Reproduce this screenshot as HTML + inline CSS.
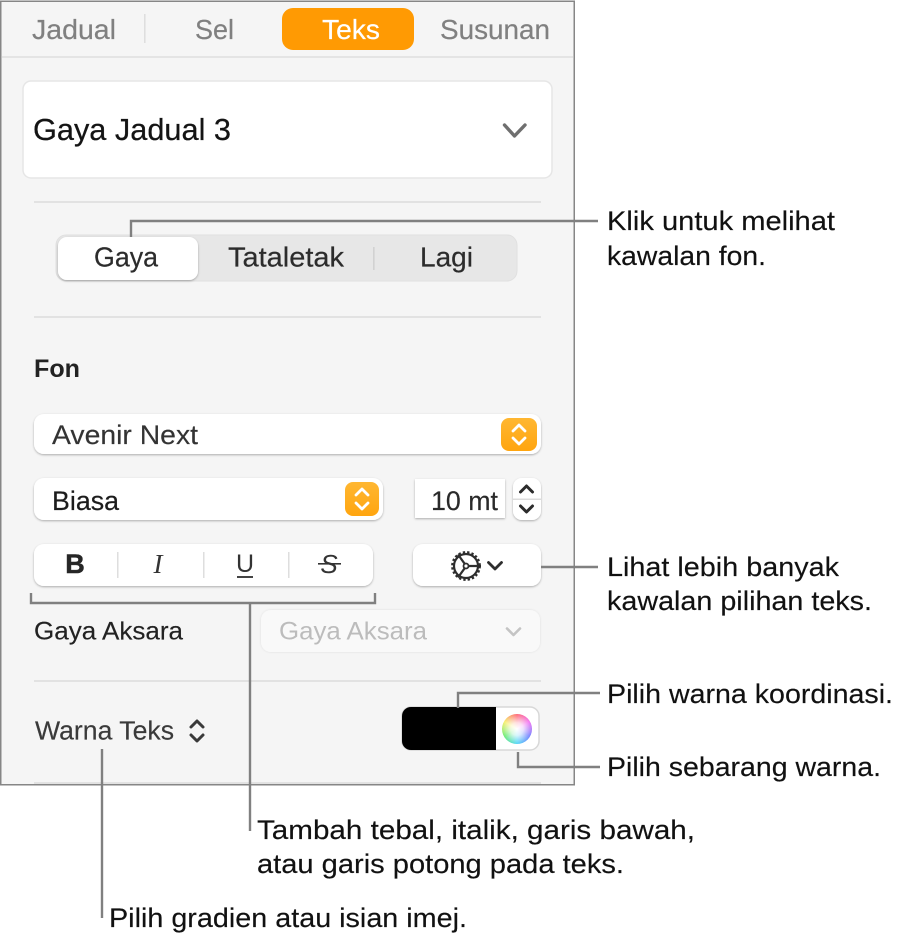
<!DOCTYPE html>
<html><head><meta charset="utf-8">
<style>
html,body{margin:0;padding:0;background:#fff;width:910px;height:944px;overflow:hidden}
svg{display:block}
text{font-family:"Liberation Sans",sans-serif}
.wheel{width:30px;height:30px;border-radius:50%;background:radial-gradient(circle,#fff 0%,rgba(255,255,255,.8) 30%,rgba(255,255,255,0) 80%),conic-gradient(#ff4d5e,#f05af0 60deg,#5a6cff 120deg,#35d0f5 180deg,#50e85a 240deg,#f5ec50 300deg,#ff4d5e)}
</style></head>
<body>
<svg width="910" height="944" viewBox="0 0 910 944" xmlns="http://www.w3.org/2000/svg">
<defs>
<filter id="s" x="-5%" y="-10%" width="110%" height="130%"><feDropShadow dx="0" dy="1" stdDeviation="1.100" flood-color="#000" flood-opacity=".3"/></filter>
<filter id="l" x="-5%" y="-10%" width="110%" height="130%"><feDropShadow dx="0" dy="0" stdDeviation="1" flood-color="#000" flood-opacity=".1"/></filter>
<linearGradient id="o" x1="0" y1="0" x2="0" y2="1"><stop offset="0" stop-color="#ffb732"/><stop offset="1" stop-color="#ffa50f"/></linearGradient>
</defs>

<!-- panel -->
<rect x=".75" y="1.25" width="573.5" height="783.5" fill="#f5f5f5" stroke="#868686" stroke-width="1.5"/>
<rect x="2" y="56" width="571" height="2" fill="#e4e4e4"/>

<!-- tabs -->
<rect x="282" y="8" width="132" height="42" rx="11" fill="#ff9a03"/>
<rect x="144" y="14" width="1.6" height="29" fill="#dedede"/>
<text x="32" y="39" font-size="28" stroke="#808080" stroke-width=".2" fill="#808080" textLength="84" lengthAdjust="spacingAndGlyphs">Jadual</text>
<text x="195" y="39" font-size="28" stroke="#808080" stroke-width=".2" fill="#808080" textLength="39" lengthAdjust="spacingAndGlyphs">Sel</text>
<text x="322" y="39" font-size="28" stroke="#fff" stroke-width=".2" fill="#fff" textLength="58" lengthAdjust="spacingAndGlyphs">Teks</text>
<text x="440" y="39" font-size="28" stroke="#808080" stroke-width=".2" fill="#808080" textLength="110" lengthAdjust="spacingAndGlyphs">Susunan</text>

<!-- style card -->
<rect x="23" y="81" width="529" height="97" rx="8" fill="#fff" stroke="#e6e6e6" stroke-width="1.5"/>
<text x="33" y="140" font-size="31" stroke="#141414" stroke-width=".25" fill="#141414" textLength="198" lengthAdjust="spacingAndGlyphs">Gaya Jadual 3</text>
<path d="M504.500 125L514.500 136L525 125" fill="none" stroke="#6f6f6f" stroke-width="3.400" stroke-linecap="round" stroke-linejoin="round"/>
<rect x="34" y="201" width="507" height="2" fill="#e2e2e2"/>

<!-- segmented -->
<rect x="56" y="235" width="461" height="46" rx="10" fill="#e7e7e7" stroke="#e0e0e0"/>
<rect x="58" y="237" width="140" height="43" rx="9" fill="#fff" filter="url(#s)"/>
<rect x="373" y="247" width="1.600" height="23" fill="#d2d2d2"/>
<text x="94" y="266.500" font-size="27.500" stroke="#2c2c2c" stroke-width=".2" fill="#2c2c2c" textLength="64" lengthAdjust="spacingAndGlyphs">Gaya</text>
<text x="228" y="266.500" font-size="27.500" stroke="#2c2c2c" stroke-width=".2" fill="#2c2c2c" textLength="116" lengthAdjust="spacingAndGlyphs">Tataletak</text>
<text x="420" y="266.500" font-size="27.500" stroke="#2c2c2c" stroke-width=".2" fill="#2c2c2c" textLength="53" lengthAdjust="spacingAndGlyphs">Lagi</text>
<rect x="34" y="316" width="507" height="2" fill="#e2e2e2"/>

<text x="34" y="377" font-size="25" font-weight="700" fill="#222" textLength="46" lengthAdjust="spacingAndGlyphs">Fon</text>

<!-- font popup -->
<rect x="34" y="414" width="507" height="40" rx="10" fill="#fff" filter="url(#s)"/>
<text x="52" y="444" font-size="27" stroke="#333" stroke-width=".15" fill="#333" textLength="146" lengthAdjust="spacingAndGlyphs">Avenir Next</text>
<rect x="501" y="418" width="36" height="33" rx="8" fill="url(#o)"/>
<path d="M513 431l6-6 6 6M513 438l6 6 6-6" fill="none" stroke="#fff" stroke-width="2.800" stroke-linecap="round" stroke-linejoin="round"/>

<!-- biasa popup -->
<rect x="34" y="478" width="349" height="42" rx="10" fill="#fff" filter="url(#s)"/>
<text x="52" y="510" font-size="27" stroke="#1c1c1c" stroke-width=".2" fill="#1c1c1c" textLength="67" lengthAdjust="spacingAndGlyphs">Biasa</text>
<rect x="345" y="482" width="34" height="34" rx="8" fill="url(#o)"/>
<path d="M356 495l6-6 6 6M356 503l6 6 6-6" fill="none" stroke="#fff" stroke-width="2.800" stroke-linecap="round" stroke-linejoin="round"/>

<!-- size field -->
<rect x="415" y="479" width="90" height="39" fill="#fff" filter="url(#s)"/>
<text x="431" y="510" font-size="27" stroke="#2a2a2a" stroke-width=".15" fill="#2a2a2a" textLength="67" lengthAdjust="spacingAndGlyphs">10 mt</text>
<rect x="513" y="478" width="28" height="42" rx="9" fill="#fff" filter="url(#s)"/>
<rect x="513" y="498.500" width="28" height="1.500" fill="#dcdcdc"/>
<path d="M520.500 492l6-6 6 6M520.500 506l6 6 6-6" fill="none" stroke="#2c2c2c" stroke-width="3" stroke-linecap="round" stroke-linejoin="round"/>

<!-- BIUS -->
<rect x="34" y="544" width="339" height="42" rx="10" fill="#fff" filter="url(#s)"/>
<rect x="117" y="552" width="1.500" height="26" fill="#dedede"/>
<rect x="203" y="552" width="1.500" height="26" fill="#dedede"/>
<rect x="288" y="552" width="1.500" height="26" fill="#dedede"/>
<text x="75" y="573" font-size="27" font-weight="700" stroke="#262626" stroke-width=".5" fill="#262626" text-anchor="middle">B</text>
<text x="158" y="573" font-size="27" font-style="italic" fill="#333" text-anchor="middle" style="font-family:'Liberation Serif',serif">I</text>
<text x="245" y="572" font-size="25" fill="#333" text-anchor="middle">U</text>
<rect x="237" y="576" width="16" height="2" fill="#444"/>
<text x="329" y="573" font-size="26" fill="#333" text-anchor="middle" font-style="italic">S</text>
<rect x="318" y="563" width="23" height="1.600" fill="#333"/>

<!-- gear button -->
<rect x="413" y="544" width="128" height="42" rx="10" fill="#fff" filter="url(#s)"/>
<circle cx="466" cy="566" r="12" fill="none" stroke="#2e2e2e" stroke-width="2.200"/>
<circle cx="466" cy="566" r="13.500" fill="none" stroke="#2e2e2e" stroke-width="2.800" stroke-dasharray="2.300 2"/>
<circle cx="466" cy="566" r="2.500" fill="none" stroke="#2e2e2e" stroke-width="1.800"/>
<path d="M468.500 566H481M464.700 563.800L458 554.500M464.700 568.200L458 577.500" fill="none" stroke="#2e2e2e" stroke-width="2.200"/>
<path d="M488.500 562.500l6.500 6.500 6.500-6.500" fill="none" stroke="#2e2e2e" stroke-width="2.800" stroke-linecap="round" stroke-linejoin="round"/>

<!-- gaya aksara -->
<text x="34" y="639.500" font-size="25" stroke="#222" stroke-width=".15" fill="#222" textLength="149" lengthAdjust="spacingAndGlyphs">Gaya Aksara</text>
<rect x="261" y="610" width="279" height="42" rx="10" fill="#f9f9f9" filter="url(#l)"/>
<text x="279" y="639.500" font-size="25" fill="#bcbcbc" textLength="148" lengthAdjust="spacingAndGlyphs">Gaya Aksara</text>
<path d="M507 628.500l6.500 6.500 6.500-6.500" fill="none" stroke="#c4c4c4" stroke-width="2.600" stroke-linecap="round" stroke-linejoin="round"/>
<rect x="34" y="680" width="507" height="2" fill="#e2e2e2"/>

<!-- warna teks -->
<text x="35" y="739.500" font-size="25.500" stroke="#3a3a3a" stroke-width=".15" fill="#3a3a3a" textLength="139" lengthAdjust="spacingAndGlyphs">Warna Teks</text>
<path d="M191 727l6-6 6 6M191 735l6 6 6-6" fill="none" stroke="#3a3a3a" stroke-width="3" stroke-linecap="round" stroke-linejoin="round"/>
<rect x="402" y="707" width="137" height="43" rx="9" fill="#fff" stroke="#d8d8d8" stroke-width="1.500"/>
<path d="M411 707H496V750H411a9 9 0 0 1-9-9V716a9 9 0 0 1 9-9Z" fill="#000"/>
<foreignObject x="502" y="714" width="30" height="30"><div xmlns="http://www.w3.org/1999/xhtml" class="wheel"></div></foreignObject>
<rect x="34" y="782" width="507" height="2" fill="#e2e2e2"/>
<rect x="0" y="784" width="575" height="1.500" fill="#868686"/>

<!-- callout lines -->
<g fill="none" stroke="#808080" stroke-width="2.400">
<path d="M131 237V221H598"/>
<path d="M541 567H598"/>
<path d="M458 708V693H600"/>
<path d="M518 752V767H600"/>
<path d="M31 593V603H375V593"/>
<path d="M250 603V831"/>
<path d="M102 749V918"/>
</g>

<!-- callout text -->
<g font-size="27" fill="#111" stroke="#111" stroke-width=".15">
<text x="607" y="230" textLength="228" lengthAdjust="spacingAndGlyphs">Klik untuk melihat</text>
<text x="607" y="265" textLength="159" lengthAdjust="spacingAndGlyphs">kawalan fon.</text>
<text x="607" y="576" textLength="232" lengthAdjust="spacingAndGlyphs">Lihat lebih banyak</text>
<text x="607" y="610" textLength="265" lengthAdjust="spacingAndGlyphs">kawalan pilihan teks.</text>
<text x="607" y="703" textLength="286" lengthAdjust="spacingAndGlyphs">Pilih warna koordinasi.</text>
<text x="607" y="776" textLength="274" lengthAdjust="spacingAndGlyphs">Pilih sebarang warna.</text>
<text x="257" y="839" textLength="438" lengthAdjust="spacingAndGlyphs">Tambah tebal, italik, garis bawah,</text>
<text x="257" y="873" textLength="367" lengthAdjust="spacingAndGlyphs">atau garis potong pada teks.</text>
<text x="109" y="927" textLength="358" lengthAdjust="spacingAndGlyphs">Pilih gradien atau isian imej.</text>
</g>
</svg>
</body></html>
